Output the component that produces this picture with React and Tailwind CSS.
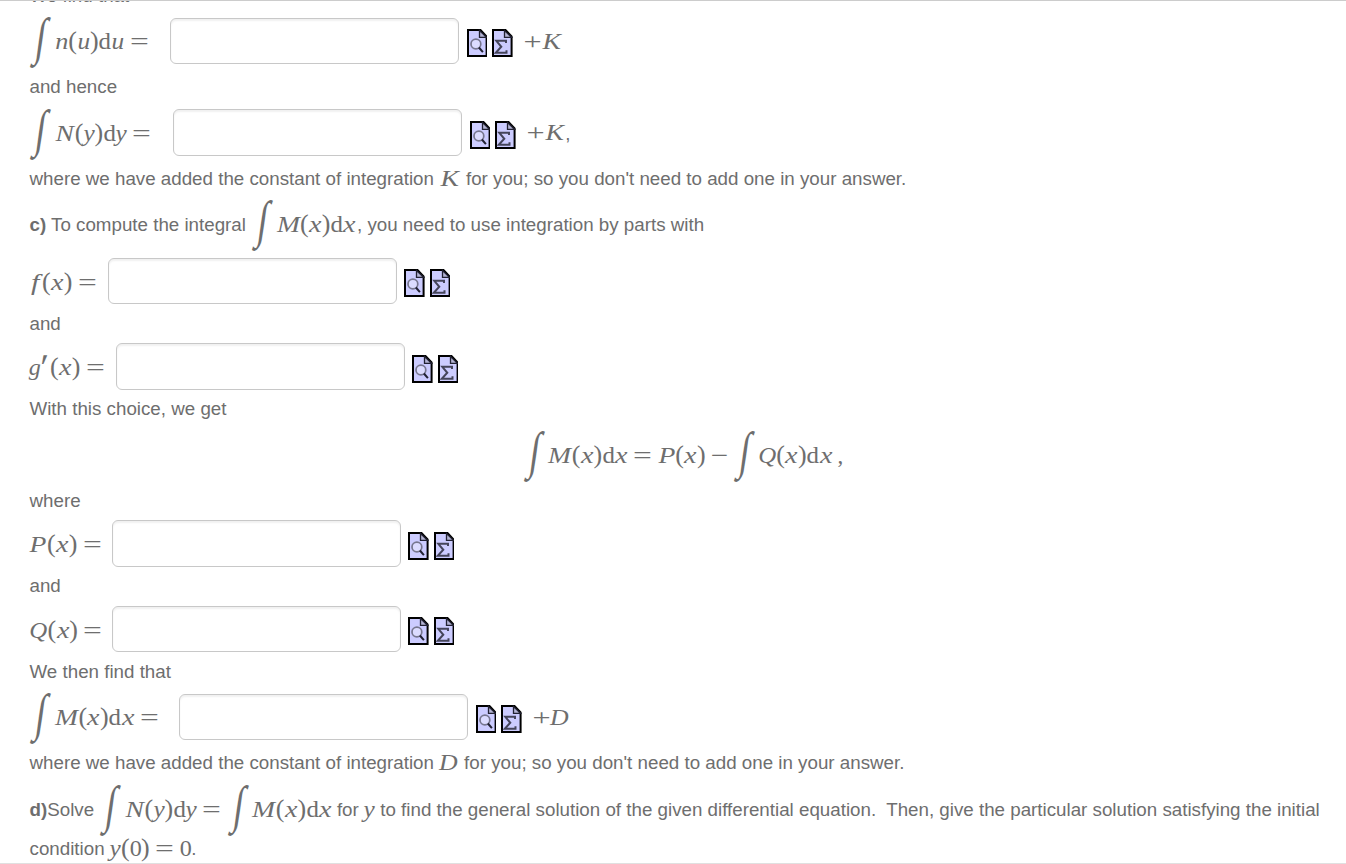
const INPUT_SHADOW = "shadow-[inset_0_2px_2px_rgba(0,0,0,0.06)]";

// advance width in em, horizontal stretch, and extra classes of each symbol
const glyphs = {
  n: [0.6, 1.14, "italic"],
  u: [0.572, 1.1, "italic"],
  x: [0.572, 1.22, "italic"],
  y: [0.49, 1.1, "italic"],
  f: [0.55, 1.3, "italic mr-[1px]"],
  g: [0.477, 1.05, "italic"],
  N: [0.888, 1.2, "italic"],
  M: [1.051, 1.2, "italic"],
  P: [0.77, 1.2, "italic"],
  Q: [0.791, 1.08, "italic"],
  K: [0.889, 1.2, "italic"],
  D: [0.828, 1.12, "italic"],
  d: [0.556, 1.08, ""],
  0: [0.5, 1.05, ""],
  "(": [0.389, 1, "text-[26px]"],
  ")": [0.389, 1, "text-[26px]"],
  "=": [0.778, 1.45, ""],
  "+": [0.778, 1.4, ""],
  "−": [0.778, 1.35, ""],
  "′": [0.43, 1, "prime"],
  ",": [0.278, 1, ""],
  "∫": [1.111, 1, "integral"],
  " ": [0.278, 1, ""],
  "~": [0.222, 1, ""],
};

function Symbol({ char, stretch, style }) {
  if (style === "integral") {
    return (
      <span className="mr-[5px] origin-center [transform:translate(2px,-4px)_skewX(-8deg)_scale(1.6,2.25)]">∫</span>
    );
  }
  if (style === "prime") {
    return <span className="text-[38px] leading-[10px] [transform:translate(-1px,5px)_skewX(-4deg)]">′</span>;
  }
  return (
    <span className={style} style={{ transform: `scaleX(${stretch})` }}>
      {char === "~" ? " " : char}
    </span>
  );
}

function Formula({ tex, className = "" }) {
  return (
    <span className={`inline-flex shrink-0 items-baseline font-['Liberation_Serif',serif] text-[23px] leading-[25px] ${className}`}>
      {[...tex].map((char, i) => {
        const [width, stretch, style] = glyphs[char];
        return (
          <span key={i} className="flex shrink-0 justify-center" style={{ width: `${width * 22.6}px` }}>
            <Symbol char={char} stretch={stretch} style={style} />
          </span>
        );
      })}
    </span>
  );
}

function PageIcon({ children }) {
  return (
    <svg width="20.6" height="28" viewBox="0 0 20.6 28" fill="none">
      <path d="M1 1h12.5l6.1 6.5V27H1z" fill="#ccccff" stroke="#000" strokeWidth="2" />
      <path d="M12.5 1.5v6.8h7z" fill="#b4b4d4" stroke="#222233" strokeWidth="1.3" />
      {children}
    </svg>
  );
}

function PreviewIcon() {
  return (
    <PageIcon>
      <circle cx="8.9" cy="15" r="4.9" fill="#dcdcff" stroke="#77778f" strokeWidth="1.7" />
      <path d="M11.9 18.5l4 4.6" stroke="#222233" strokeWidth="2" />
    </PageIcon>
  );
}

function SigmaIcon() {
  return (
    <PageIcon>
      <path d="M14 14v-2.2H4.3l5 6-5.5 6H14.5v-2.5" stroke="#44445a" strokeWidth="2" />
    </PageIcon>
  );
}

function AnswerRow({ tex, height, labelWidth, after, comma }) {
  return (
    <div className={`flex items-center ${height}`}>
      <div className={`flex h-[25px] shrink-0 ${labelWidth}`}>
        <Formula tex={tex} />
      </div>
      <input
        type="text"
        className={`h-[46.5px] w-[288.5px] shrink-0 rounded-[6px] border border-[#c8c8c8] bg-white px-3 outline-none ${INPUT_SHADOW}`}
      />
      <div className={`mt-1 flex gap-[5px] ${after ? "ml-[8px]" : "ml-[7.5px]"}`}>
        <PreviewIcon />
        <SigmaIcon />
      </div>
      {after && (
        <div className="ml-[11px] flex items-baseline leading-[25px]">
          <Formula tex={after} />
          {comma && <span className="ml-px">,</span>}
        </div>
      )}
    </div>
  );
}

function TextRow({ height, children }) {
  return (
    <div className={`flex items-center ${height}`}>
      <div className="flex items-baseline whitespace-pre leading-[27px]">{children}</div>
    </div>
  );
}

export default function App() {
  return (
    <div className="h-[864px] w-[1346px] overflow-hidden border-t border-b border-t-[#cccccc] border-b-[#e0e0e0] bg-white pl-[29.5px] font-['Liberation_Sans',sans-serif] text-[18.75px] text-[#6e6e6e]">
      <div className="flex h-[9px] items-end overflow-hidden pb-px leading-[27px]">
        <span>We find that</span>
      </div>

      <AnswerRow tex="∫n(u)du =" height="h-[62px]" labelWidth="w-[140.5px] -translate-y-px" after="+K" />
      <TextRow height="h-[29px]">and hence</TextRow>
      <AnswerRow tex="∫N(y)dy =" height="h-[63px]" labelWidth="w-[143.5px]" after="+K" comma />
      <TextRow height="h-[29px]">
        <span>where we have added the constant of integration </span>
        <Formula tex="K" className="translate-y-px" />
        <span className="ml-[1.5px]"> for you; so you don't need to add one in your answer.</span>
      </TextRow>

      {/* Part c */}
      <TextRow height="h-[63px] pb-[2px]">
        <b>c)</b>
        <span> To compute the integral </span>
        <Formula tex="∫M(x)dx" className="translate-y-px" />
        <span className="ml-px">, you need to use integration by parts with</span>
      </TextRow>
      <AnswerRow tex="f(x) =" height="h-[50px]" labelWidth="w-[78.5px]" />
      <TextRow height="h-[34px]">and</TextRow>
      <AnswerRow tex="g′(x) =" height="h-[53px]" labelWidth="w-[86.5px]" />
      <TextRow height="h-[31px]">With this choice, we get</TextRow>
      <div className="flex h-[61px] items-center justify-center pr-[9px]">
        <Formula tex="∫M(x)dx = P(x)~−~∫Q(x)dx~," />
      </div>
      <TextRow height="h-[31px]">where</TextRow>
      <AnswerRow tex="P(x) =" height="h-[55px]" labelWidth="w-[82.5px]" />
      <TextRow height="h-[29px]">and</TextRow>
      <AnswerRow tex="Q(x) =" height="h-[58px]" labelWidth="w-[82.5px]" />
      <TextRow height="h-[26px]">We then find that</TextRow>
      <AnswerRow tex="∫M(x)dx =" height="h-[66px]" labelWidth="w-[149.5px] -translate-y-px" after="+D" />
      <TextRow height="h-[25px]">
        <span>where we have added the constant of integration </span>
        <Formula tex="D" className="translate-y-px" />
        <span className="ml-px"> for you; so you don't need to add one in your answer.</span>
      </TextRow>

      {/* Part d */}
      <TextRow height="h-[59px] pt-[8px]">
        <b>d)</b>
        <span>Solve </span>
        <Formula tex="∫N(y)dy = ∫M(x)dx" className="translate-y-px" />
        <span> for </span>
        <Formula tex="y" className="translate-y-px" />
        <span> to find the general solution of the given differential equation.  Then, give the particular solution satisfying the initial</span>
      </TextRow>
      <TextRow height="h-[29px] pb-[2px]">
        <span>condition </span>
        <Formula tex="y(0) = 0" className="translate-y-px" />
        <span>.</span>
      </TextRow>
    </div>
  );
}
